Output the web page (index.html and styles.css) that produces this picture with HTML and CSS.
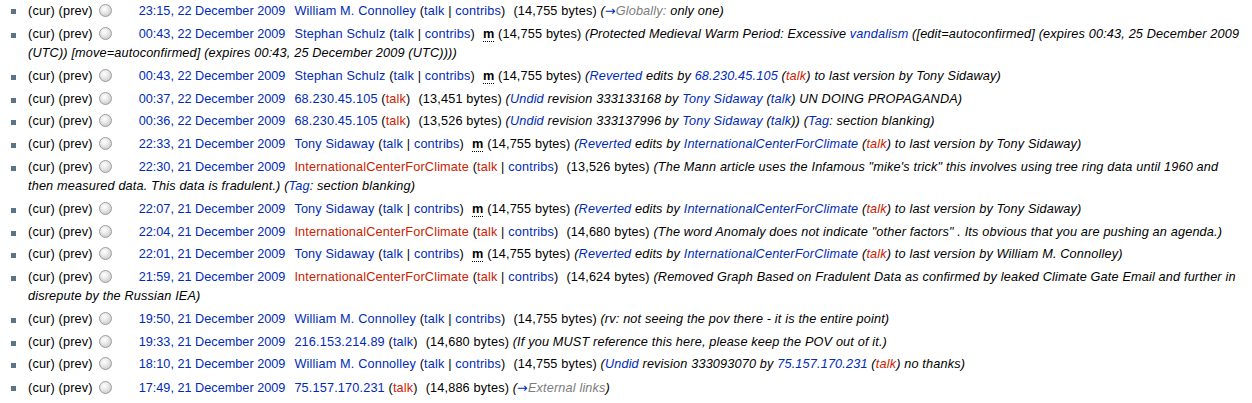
FILE: index.html
```html
<!DOCTYPE html>
<html>
<head>
	<title>Revision history</title>
	<meta charset="utf-8">
	<link rel="stylesheet" href="styles.css">
</head>
<body>
	<ul class="history">
		<li><span class="nav">(cur) (prev)</span><span class="radio"></span><a class="date" href="#">23:15, 22 December 2009</a><span class="user"><a href="#">William M. Connolley</a> (<a href="#">talk</a> | <a href="#">contribs</a>)</span><span class="bytes">(14,755 bytes)</span> <span class="comment">(<a class="arrow" href="#">→</a><span class="auto">Globally:</span> only one)</span></li>
		<li><span class="nav">(cur) (prev)</span><span class="radio"></span><a class="date" href="#">00:43, 22 December 2009</a><span class="user"><a href="#">Stephan Schulz</a> (<a href="#">talk</a> | <a href="#">contribs</a>)</span><abbr class="minor">m</abbr> <span class="bytes">(14,755 bytes)</span> <span class="comment">(Protected Medieval Warm Period: Excessive <a href="#">vandalism</a> ([edit=autoconfirmed] (expires 00:43, 25 December 2009 (UTC)) [move=autoconfirmed] (expires 00:43, 25 December 2009 (UTC))))</span></li>
		<li><span class="nav">(cur) (prev)</span><span class="radio"></span><a class="date" href="#">00:43, 22 December 2009</a><span class="user"><a href="#">Stephan Schulz</a> (<a href="#">talk</a> | <a href="#">contribs</a>)</span><abbr class="minor">m</abbr> <span class="bytes">(14,755 bytes)</span> <span class="comment">(<a href="#">Reverted</a> edits by <a href="#">68.230.45.105</a> (<a class="new" href="#">talk</a>) to last version by Tony Sidaway)</span></li>
		<li><span class="nav">(cur) (prev)</span><span class="radio"></span><a class="date" href="#">00:37, 22 December 2009</a><span class="user"><a href="#">68.230.45.105</a> (<a class="new" href="#">talk</a>)</span><span class="bytes">(13,451 bytes)</span> <span class="comment">(<a href="#">Undid</a> revision 333133168 by <a href="#">Tony Sidaway</a> (<a href="#">talk</a>) UN DOING PROPAGANDA)</span></li>
		<li><span class="nav">(cur) (prev)</span><span class="radio"></span><a class="date" href="#">00:36, 22 December 2009</a><span class="user"><a href="#">68.230.45.105</a> (<a class="new" href="#">talk</a>)</span><span class="bytes">(13,526 bytes)</span> <span class="comment">(<a href="#">Undid</a> revision 333137996 by <a href="#">Tony Sidaway</a> (<a href="#">talk</a>))</span> <span class="tag">(<a href="#">Tag</a>: section blanking)</span></li>
		<li><span class="nav">(cur) (prev)</span><span class="radio"></span><a class="date" href="#">22:33, 21 December 2009</a><span class="user"><a href="#">Tony Sidaway</a> (<a href="#">talk</a> | <a href="#">contribs</a>)</span><abbr class="minor">m</abbr> <span class="bytes">(14,755 bytes)</span> <span class="comment">(<a href="#">Reverted</a> edits by <a href="#">InternationalCenterForClimate</a> (<a class="new" href="#">talk</a>) to last version by Tony Sidaway)</span></li>
		<li><span class="nav">(cur) (prev)</span><span class="radio"></span><a class="date" href="#">22:30, 21 December 2009</a><span class="user"><a class="new" href="#">InternationalCenterForClimate</a> (<a class="new" href="#">talk</a> | <a href="#">contribs</a>)</span><span class="bytes">(13,526 bytes)</span> <span class="comment">(The Mann article uses the Infamous "mike's trick" this involves using tree ring data until 1960 and then measured data. This data is fradulent.)</span> <span class="tag">(<a href="#">Tag</a>: section blanking)</span></li>
		<li><span class="nav">(cur) (prev)</span><span class="radio"></span><a class="date" href="#">22:07, 21 December 2009</a><span class="user"><a href="#">Tony Sidaway</a> (<a href="#">talk</a> | <a href="#">contribs</a>)</span><abbr class="minor">m</abbr> <span class="bytes">(14,755 bytes)</span> <span class="comment">(<a href="#">Reverted</a> edits by <a href="#">InternationalCenterForClimate</a> (<a class="new" href="#">talk</a>) to last version by Tony Sidaway)</span></li>
		<li><span class="nav">(cur) (prev)</span><span class="radio"></span><a class="date" href="#">22:04, 21 December 2009</a><span class="user"><a class="new" href="#">InternationalCenterForClimate</a> (<a class="new" href="#">talk</a> | <a href="#">contribs</a>)</span><span class="bytes">(14,680 bytes)</span> <span class="comment">(The word Anomaly does not indicate "other factors" . Its obvious that you are pushing an agenda.)</span></li>
		<li><span class="nav">(cur) (prev)</span><span class="radio"></span><a class="date" href="#">22:01, 21 December 2009</a><span class="user"><a href="#">Tony Sidaway</a> (<a href="#">talk</a> | <a href="#">contribs</a>)</span><abbr class="minor">m</abbr> <span class="bytes">(14,755 bytes)</span> <span class="comment">(<a href="#">Reverted</a> edits by <a href="#">InternationalCenterForClimate</a> (<a class="new" href="#">talk</a>) to last version by William M. Connolley)</span></li>
		<li><span class="nav">(cur) (prev)</span><span class="radio"></span><a class="date" href="#">21:59, 21 December 2009</a><span class="user"><a class="new" href="#">InternationalCenterForClimate</a> (<a class="new" href="#">talk</a> | <a href="#">contribs</a>)</span><span class="bytes">(14,624 bytes)</span> <span class="comment">(Removed Graph Based on Fradulent Data as confirmed by leaked Climate Gate Email and further in disrepute by the Russian IEA)</span></li>
		<li><span class="nav">(cur) (prev)</span><span class="radio"></span><a class="date" href="#">19:50, 21 December 2009</a><span class="user"><a href="#">William M. Connolley</a> (<a href="#">talk</a> | <a href="#">contribs</a>)</span><span class="bytes">(14,755 bytes)</span> <span class="comment">(rv: not seeing the pov there - it is the entire point)</span></li>
		<li><span class="nav">(cur) (prev)</span><span class="radio"></span><a class="date" href="#">19:33, 21 December 2009</a><span class="user"><a href="#">216.153.214.89</a> (<a href="#">talk</a>)</span><span class="bytes">(14,680 bytes)</span> <span class="comment">(If you MUST reference this here, please keep the POV out of it.)</span></li>
		<li><span class="nav">(cur) (prev)</span><span class="radio"></span><a class="date" href="#">18:10, 21 December 2009</a><span class="user"><a href="#">William M. Connolley</a> (<a href="#">talk</a> | <a href="#">contribs</a>)</span><span class="bytes">(14,755 bytes)</span> <span class="comment">(<a href="#">Undid</a> revision 333093070 by <a href="#">75.157.170.231</a> (<a class="new" href="#">talk</a>) no thanks)</span></li>
		<li><span class="nav">(cur) (prev)</span><span class="radio"></span><a class="date" href="#">17:49, 21 December 2009</a><span class="user"><a href="#">75.157.170.231</a> (<a class="new" href="#">talk</a>)</span><span class="bytes">(14,886 bytes)</span> <span class="comment">(<a class="arrow" href="#">→</a><span class="auto"><a href="#">External links</a></span>)</span></li>
	</ul>
</body>
</html>
```

FILE: styles.css
```css
*{
	margin:0;
	padding:0;
}
body{
	background:#fff;
	font-family:"Liberation Sans",Arial,sans-serif;
	font-size:12.7px;
	letter-spacing:0.16px;
	color:#000;
}
a{
	color:#002bb8;
	text-decoration:none;
}
a.new{
	color:#cc2200;
}
.history{
	list-style:none;
	padding-top:1px;
}
.history li{
	line-height:19.5px;
	padding-left:28px;
	margin-bottom:3.2px;
	padding-right:9px;
	background:linear-gradient(#5c7484,#5c7484) no-repeat 11px 8px / 5px 5px;
}
.radio{
	display:inline-block;
	box-sizing:border-box;
	width:13px;
	height:13px;
	margin:0 27px 0 6px;
	vertical-align:-2px;
	border:1px solid #9c9c9c;
	border-radius:50%;
	background:radial-gradient(circle at 40% 35%,#fff 0,#ececec 35%,#bdbdbd 100%);
}
.date{
	letter-spacing:0;
}
.user{
	margin-left:9px;
}
.bytes{
	margin-left:8px;
}
.minor{
	font-weight:bold;
	margin-left:8px;
	text-decoration:none;
	border-bottom:1px dotted #000;
}
.minor + .bytes{
	margin-left:0;
}
.comment,.tag{
	font-style:italic;
}
.arrow{
	font-family:"DejaVu Sans",sans-serif;
	font-style:normal;
}
.auto,.auto a{
	color:#7d7d7d;
}
```
